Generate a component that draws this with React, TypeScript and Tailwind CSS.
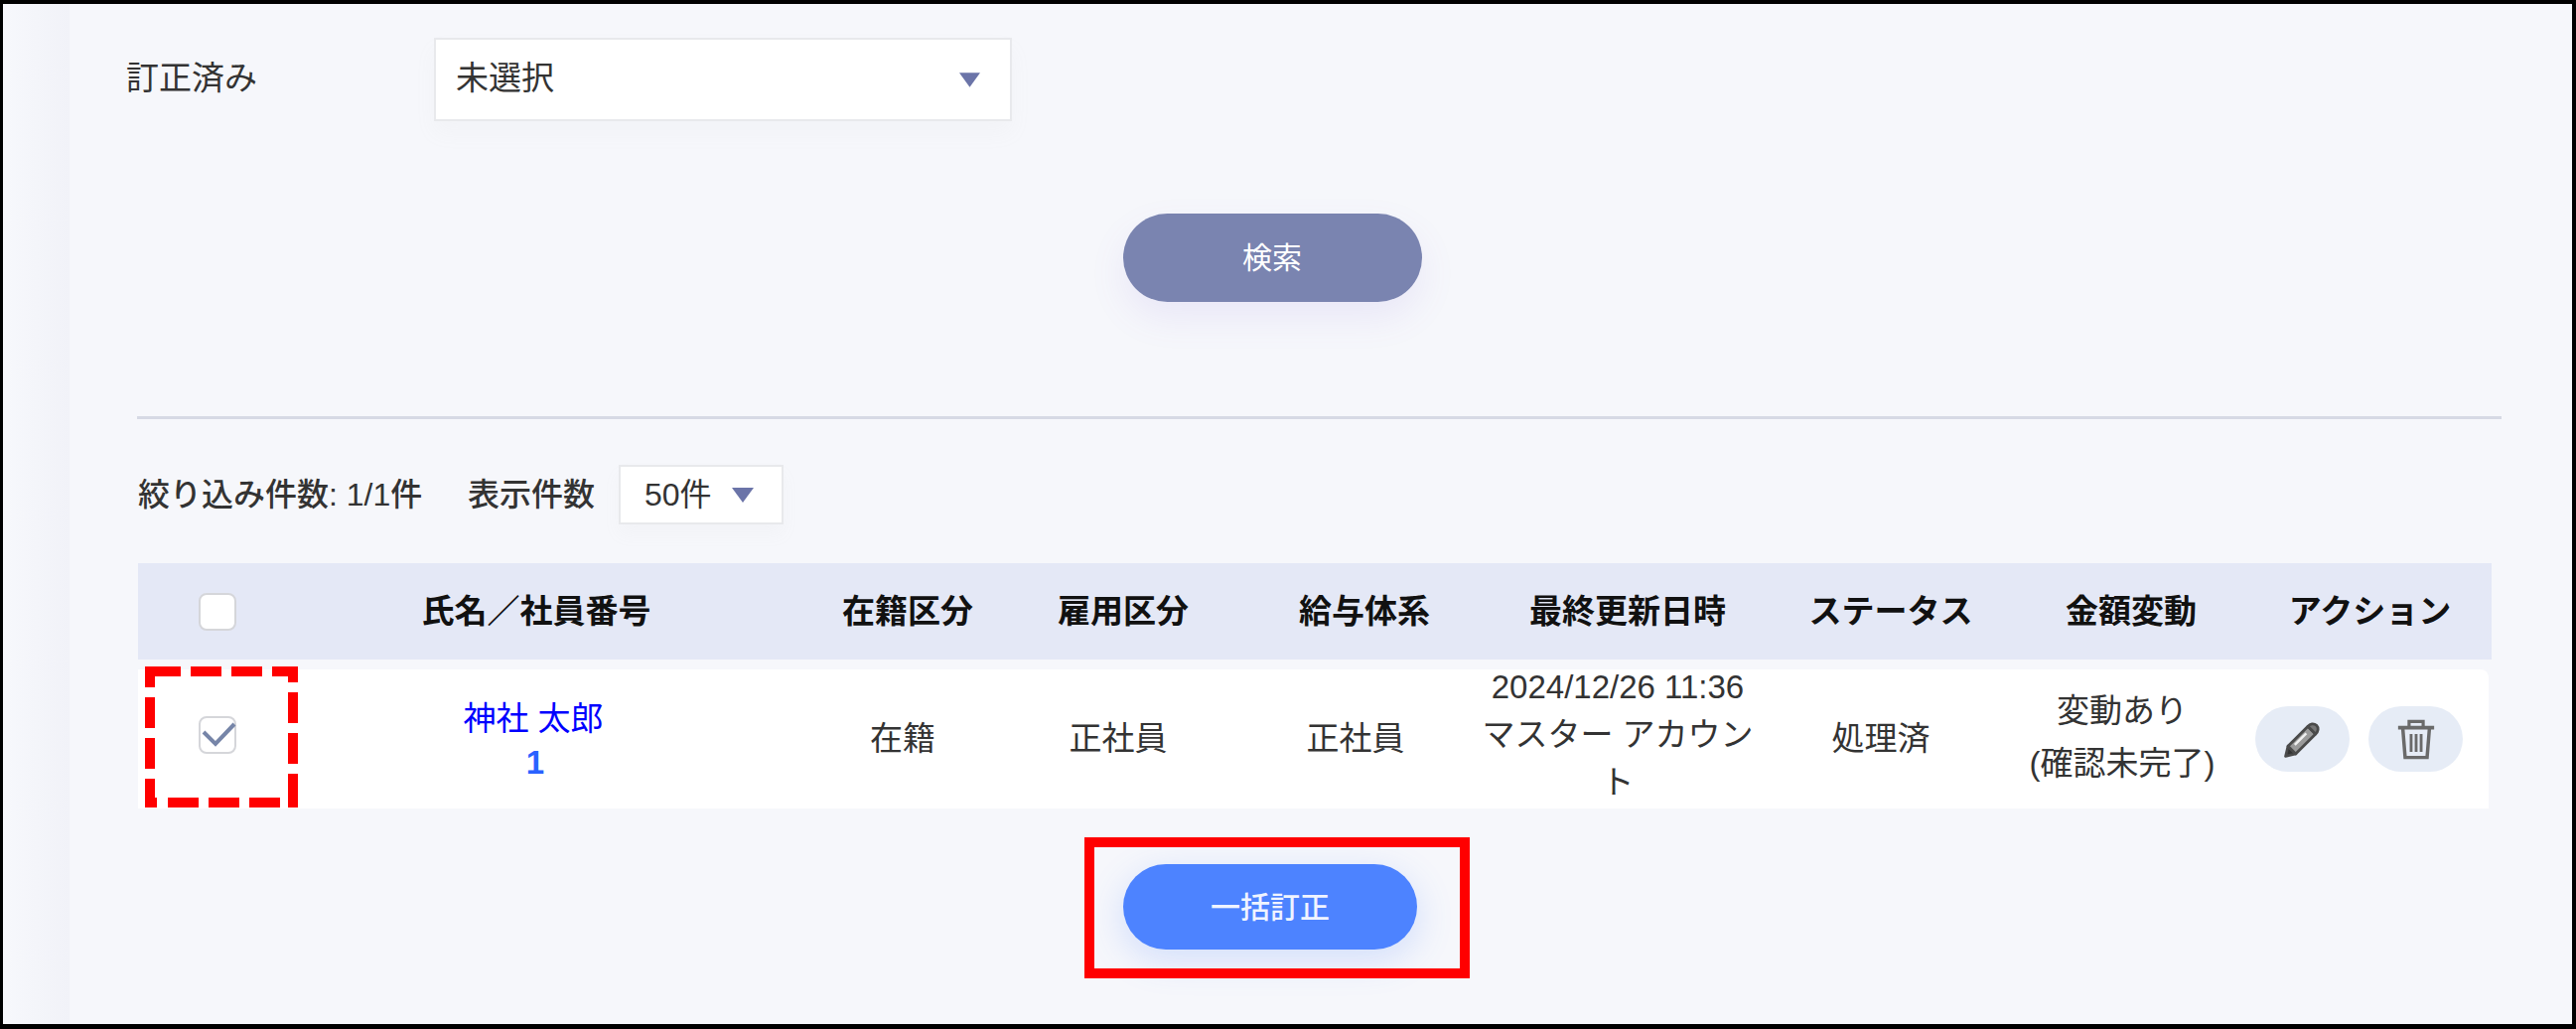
function Caret({ className }: { className: string }) {
  return (
    <svg viewBox="0 0 22 15" className={className}>
      <path d="M0 0H22L11 15Z" fill="#6b74a8" />
    </svg>
  );
}

function PencilIcon() {
  return (
    <svg viewBox="0 0 24 24" className="w-[37px] h-[37px]" fill="none" stroke="#4a4a4a" strokeWidth="1.8" strokeLinejoin="round">
      <path d="M1 23L2.6 16.4L7.6 21.4Z" fill="#333" />
      <path d="M2.6 16.4L15.6 3.4L20.6 8.4L7.6 21.4Z" fill="#9a9a9a" />
      <path d="M15.6 3.4C17 1.6 19.4 1.2 21.2 2.8C22.8 4.4 22.4 6.8 20.6 8.4Z" fill="#777" />
      <path d="M7 15.5L14.5 8" stroke="#f0f0f0" strokeWidth="1.6" />
    </svg>
  );
}

function TrashIcon() {
  return (
    <svg viewBox="0 0 24 26" className="w-[38px] h-[41px]" fill="none" stroke="#6a6a6a" strokeWidth="2">
      <path d="M0.5 5.5H23.5" strokeWidth="2.4" />
      <path d="M7.5 5V1.5H16.5V5" />
      <path d="M3.5 6L5 24.5H19L20.5 6" strokeWidth="2.2" />
      <path d="M8.8 9.5V21M12 9.5V21M15.2 9.5V21" strokeWidth="1.8" />
    </svg>
  );
}

export default function App() {
  return (
    <div className="relative w-[2594px] h-[1036px] overflow-hidden bg-black font-['Liberation_Sans','Noto_Sans_CJK_JP',sans-serif] text-[33px] text-[#333]">
      <div className="absolute top-[4px] left-[3px] right-[4px] bottom-[5px] flex bg-[#f6f7fb]">
        <div className="w-[67px] shrink-0 bg-gradient-to-r from-[#f7f8fc] to-[#f1f2f8]" />
        <main className="flex-1 min-w-0">
          {/* 絞り込み */}
          <div className="flex items-center mt-[34px] pl-[57px]">
            <span className="w-[310px] leading-[48px] -mt-[2px]">訂正済み</span>
            <div className="flex items-center justify-between w-[582px] h-[84px] pl-[20px] pr-[30px] bg-white border-2 border-[#e8e9ec] shadow-[0_12px_20px_rgba(180,180,190,0.06)]">
              <span className="-mt-[2px]">未選択</span>
              <Caret className="w-[21px] h-[15px]" />
            </div>
          </div>

          <div className="flex justify-center w-[2422px] mt-[93px]">
            <button className="w-[301px] h-[89px] rounded-full bg-[#7a84b0] text-white text-[30px] shadow-[0_16px_36px_rgba(130,100,220,0.1)]">
              検索
            </button>
          </div>

          <div className="ml-[68px] w-[2381px] mt-[115px] h-[3px] bg-[#d6d9e4]" />

          {/* 件数 */}
          <div className="flex items-center ml-[69px] mt-[46px] h-[60px]">
            <span className="w-[332px] font-medium text-[32px]">絞り込み件数: 1/1件</span>
            <span className="w-[152px] font-medium text-[32px]">表示件数</span>
            <div className="flex items-center w-[166px] h-[60px] pl-[24px] bg-white border-2 border-[#e8e9ec] shadow-[0_10px_16px_rgba(180,180,190,0.06)]">
              <span className="w-[88px] text-[32px]">50件</span>
              <Caret className="w-[22px] h-[15px]" />
            </div>
          </div>

          {/* 一覧 */}
          <div className="grid grid-cols-[162px_514px_198px_236px_250px_280px_250px_234px_247px] items-center ml-[69px] w-[2370px] h-[97px] mt-[39px] bg-[#e4e8f6] text-center font-bold text-[#111]">
            <div className="flex justify-center">
              <span className="w-[38px] h-[38px] -ml-[2px] rounded-lg bg-white border-2 border-[#d5d6da]" />
            </div>
            <span className="pr-[36px]">氏名／社員番号</span>
            <span>在籍区分</span>
            <span>雇用区分</span>
            <span>給与体系</span>
            <span>最終更新日時</span>
            <span>ステータス</span>
            <span>金額変動</span>
            <span>アクション</span>
          </div>

          <div className="grid grid-cols-[161px_506px_206px_228px_250px_278px_252px_234px_252px] items-center ml-[69px] w-[2367px] h-[140px] mt-[10px] bg-white rounded-tr-lg text-center text-[#333]">
            <div className="flex justify-center -mt-[8px]">
              <span className="flex items-center justify-center w-[38px] h-[38px] -ml-[2px] rounded-lg bg-white border-2 border-[#d5d6da]">
                <svg viewBox="0 0 38 38" className="w-[38px] h-[38px] shrink-0" fill="none">
                  <path d="M5 16L17 28L36 8" stroke="#7685a8" strokeWidth="4" />
                </svg>
              </span>
            </div>
            <div className="pr-[32px] leading-[44px] mt-[4px] text-[#0000ff]">
              <div>神社 太郎</div>
              <div className="font-bold text-[#2a62ff] pl-[4px]">1</div>
            </div>
            <span>在籍</span>
            <span>正社員</span>
            <span>正社員</span>
            <div className="leading-[48px] -mt-[8px]">
              2024/12/26 11:36
              <br />
              マスター アカウント
            </div>
            <span>処理済</span>
            <div className="leading-[53px] -mt-[4px]">
              変動あり
              <br />
              (確認未完了)
            </div>
            <div className="flex justify-start gap-[19px] pl-[17px]">
              <button className="flex items-center justify-center w-[95px] h-[66px] rounded-full bg-[#e6ecf6]">
                <PencilIcon />
              </button>
              <button className="flex items-center justify-center w-[95px] h-[66px] rounded-full bg-[#e6ecf6]">
                <TrashIcon />
              </button>
            </div>
          </div>

          <div className="flex justify-center w-[2418px] mt-[56px]">
            <button className="w-[296px] h-[86px] rounded-full bg-[#4d83ff] text-[#f0f4ff] text-[30px] font-medium shadow-[0_10px_36px_rgba(77,131,255,0.22)]">
              一括訂正
            </button>
          </div>
        </main>
      </div>

      {/* 注釈 */}
      <svg className="absolute left-[146px] top-[671px] w-[154px] h-[142px]" viewBox="0 0 154 142" fill="none" stroke="#ff0000" strokeWidth="10">
        <path d="M0 5H36M46 5H77M87 5H118M128 5H154" />
        <path d="M149 0V16M149 26V57M149 67V98M149 108V142" />
        <path d="M0 137H12M23 137H54M64 137H95M105 137H136M146 137H154" />
        <path d="M5 0V21M5 31V62M5 72V103M5 113V142" />
      </svg>
      <div className="absolute left-[1092px] top-[843px] w-[388px] h-[142px] border-[10px] border-[#ff0000]" />
    </div>
  );
}
